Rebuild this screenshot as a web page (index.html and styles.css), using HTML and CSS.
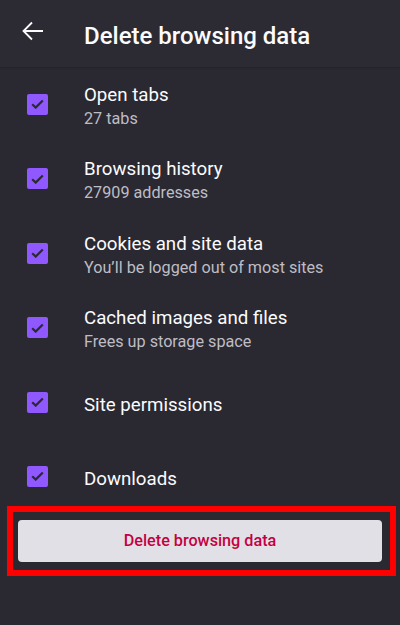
FILE: index.html
```html
<!DOCTYPE html>
<html>
<head lang="en">
    <meta charset="UTF-8">
    <title>Delete browsing data</title>
    <link rel="stylesheet" href="styles.css">
</head>
<body>
<div class="header">
    <svg class="back" width="22" height="20" viewBox="0 0 22 20">
        <path d="M21 10H2M10 1.5L1.5 10L10 18.5" fill="none" stroke="#fbfbfe" stroke-width="1.8"/>
    </svg>
    <div class="title">Delete browsing data</div>
</div>
<ul class="list">
    <li class="row">
        <span class="check"><svg width="13" height="10" viewBox="0 0 13 10"><path d="M1.2 5.2L4.7 8.6L11.8 1.4" fill="none" stroke="#2b2a33" stroke-width="2.2"/></svg></span>
        <div class="text">
            <div class="name">Open tabs</div>
            <div class="sub">27 tabs</div>
        </div>
    </li>
    <li class="row">
        <span class="check"><svg width="13" height="10" viewBox="0 0 13 10"><path d="M1.2 5.2L4.7 8.6L11.8 1.4" fill="none" stroke="#2b2a33" stroke-width="2.2"/></svg></span>
        <div class="text">
            <div class="name">Browsing history</div>
            <div class="sub">27909 addresses</div>
        </div>
    </li>
    <li class="row">
        <span class="check"><svg width="13" height="10" viewBox="0 0 13 10"><path d="M1.2 5.2L4.7 8.6L11.8 1.4" fill="none" stroke="#2b2a33" stroke-width="2.2"/></svg></span>
        <div class="text">
            <div class="name">Cookies and site data</div>
            <div class="sub">You’ll be logged out of most sites</div>
        </div>
    </li>
    <li class="row">
        <span class="check"><svg width="13" height="10" viewBox="0 0 13 10"><path d="M1.2 5.2L4.7 8.6L11.8 1.4" fill="none" stroke="#2b2a33" stroke-width="2.2"/></svg></span>
        <div class="text">
            <div class="name">Cached images and files</div>
            <div class="sub">Frees up storage space</div>
        </div>
    </li>
    <li class="row">
        <span class="check"><svg width="13" height="10" viewBox="0 0 13 10"><path d="M1.2 5.2L4.7 8.6L11.8 1.4" fill="none" stroke="#2b2a33" stroke-width="2.2"/></svg></span>
        <div class="text">
            <div class="name">Site permissions</div>
        </div>
    </li>
    <li class="row">
        <span class="check"><svg width="13" height="10" viewBox="0 0 13 10"><path d="M1.2 5.2L4.7 8.6L11.8 1.4" fill="none" stroke="#2b2a33" stroke-width="2.2"/></svg></span>
        <div class="text">
            <div class="name">Downloads</div>
        </div>
    </li>
</ul>
<div class="mark">
    <div class="btn">Delete browsing data</div>
</div>
</body>
</html>
```

FILE: styles.css
```css
*{margin: 0; padding: 0; box-sizing: border-box}
ul{list-style: none}

body{
    width: 400px;
    height: 625px;
    background: #2a2931;
    font-family: Roboto, "Noto Sans", sans-serif;
    color: #fbfbfe;
    overflow: hidden;
}

.header{
    height: 67px;
    background: #2c2b33;
    display: flex;
    align-items: center;
    padding-left: 22px;
    box-shadow: 0 1px 2px rgba(0, 0, 0, 0.15);
}
.back{
    display: block;
    margin-top: -6px;
}
.title{
    margin-left: 40px;
    font-size: 24px;
    font-weight: 500;
    margin-top: 5px;
}

.list{
    padding-top: 0.3px;
}
.row{
    height: 74.4px;
    display: flex;
    align-items: center;
    padding-left: 27px;
}
.check{
    width: 21px;
    height: 21px;
    border-radius: 2px;
    background: #9059ff;
    display: flex;
    align-items: center;
    justify-content: center;
    flex-shrink: 0;
}
.check svg{
    display: block;
}
.text{
    margin-left: 36px;
    margin-top: 6px;
}
.name{
    font-size: 18.7px;
    line-height: 23px;
}
.sub{
    font-size: 16.2px;
    line-height: 24px;
    color: #bebdc5;
}

.mark{
    margin: -8px 4px 0 7px;
    height: 70px;
    border: 6px solid #ff0000;
    padding: 8px 8px 0 5px;
}
.btn{
    height: 42px;
    background: #e1e0e6;
    border-radius: 4px;
    display: flex;
    align-items: center;
    justify-content: center;
    font-size: 16.2px;
    font-weight: 500;
    color: #c50042;
}
```
